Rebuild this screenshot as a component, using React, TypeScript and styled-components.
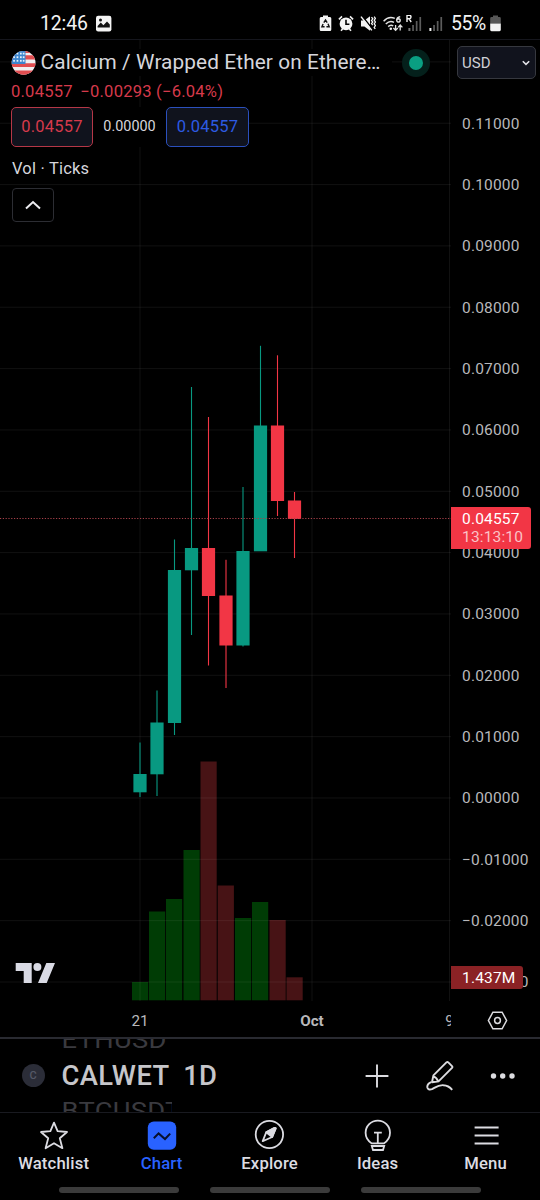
import React from "react";
import styled, { createGlobalStyle } from "styled-components";

const GlobalStyle = createGlobalStyle`
  * { box-sizing: border-box; }
  body {
    margin: 0;
    background: #000;
    color: #d6d6dc;
    font-family: Roboto, "Liberation Sans", sans-serif;
  }
`;

const Screen = styled.div`
  width: 540px;
  height: 1200px;
  display: flex;
  flex-direction: column;
  overflow: hidden;
  background: #000;
`;

const StatusBar = styled.header`
  height: 40px;
  padding: 8px 39.5px 0 40px;
  display: flex;
  align-items: center;
  border-bottom: 1px solid #15161d;
  color: #f4f4f4;
`;

const Clock = styled.span`
  width: 56px;
  font-size: 19.4px;
  letter-spacing: -0.1px;
  line-height: 32px;
`;

const StatusIcons = styled.div`
  margin-left: auto;
  display: flex;
  align-items: center;
`;

const Glyph = styled.svg<{ $gap?: number }>`
  display: block;
  flex: none;
  margin-right: ${(p) => p.$gap ?? 0}px;
`;

const BatteryText = styled.span`
  width: 38.5px;
  font-size: 19.4px;
  letter-spacing: -0.4px;
  line-height: 32px;
`;

const ChartArea = styled.main`
  position: relative;
  height: 997px;
  display: flex;
`;

const PlotColumn = styled.div`
  width: 451px;
  display: flex;
  flex-direction: column;
`;

const Plot = styled.svg`
  display: block;
  width: 451px;
  height: 961px;
`;

const TimeAxis = styled.div`
  height: 36px;
  padding-left: 54px;
  display: flex;
  overflow: hidden;
`;

const TimeLabel = styled.span<{ $width: number; $strong?: boolean }>`
  flex: none;
  width: ${(p) => p.$width}px;
  text-align: center;
  font-size: 15.2px;
  line-height: 40px;
  font-weight: ${(p) => (p.$strong ? 700 : 400)};
  color: #b8b8bb;
`;

const PriceAxis = styled.aside`
  position: relative;
  width: 89px;
  display: flex;
  flex-direction: column;
`;

const CurrencySelect = styled.button`
  width: 79px;
  height: 33px;
  margin: 6px 0 0 5.5px;
  padding: 0 5px 0 4.5px;
  display: flex;
  align-items: center;
  justify-content: space-between;
  border: 1.5px solid #36383f;
  border-radius: 5px;
  background: #11131d;
  color: #cfd0d6;
  font: 400 15px Roboto, sans-serif;
`;

const PriceScale = styled.div`
  height: 906px;
  margin-top: 14.5px;
  padding-left: 11px;
  overflow: hidden;
`;

const PriceLabel = styled.div`
  height: 61.35px;
  line-height: 61.35px;
  font-size: 15.5px;
  letter-spacing: 0.17px;
  color: #b8b8bb;
`;

const AxisFooter = styled.div`
  margin-top: auto;
  height: 33px;
  padding: 7px 0 0 35.5px;
`;

const PriceTag = styled.div<{ $top: number; $width: number; $color: string }>`
  position: absolute;
  left: 0;
  top: ${(p) => p.$top}px;
  width: ${(p) => p.$width}px;
  padding: 3px 0 2px 11px;
  border-radius: 0 3px 3px 0;
  background: ${(p) => p.$color};
  color: #fff;
  font-size: 15.5px;
  letter-spacing: 0.17px;
  line-height: 18.3px;
`;

const Countdown = styled.div`
  color: #fbc3c7;
`;

const Legend = styled.section`
  position: absolute;
  left: 11px;
  top: 9px;
  width: 422px;
`;

const TitleRow = styled.div`
  height: 27px;
  display: flex;
  align-items: center;
`;

const Title = styled.h1`
  margin: 0 0 0 4.6px;
  width: 351px;
  font-size: 20.8px;
  font-weight: 400;
  letter-spacing: 0.1px;
  line-height: 27px;
  white-space: nowrap;
  background: #000;
`;

const MarketDot = styled.span`
  width: 28px;
  height: 28px;
  margin-left: 10.9px;
  border: 7.5px solid #04201b;
  border-radius: 50%;
  background: #0a9f82;
`;

const ChangeRow = styled.div`
  margin-top: 5.6px;
  display: flex;
  gap: 7.6px;
  color: #d63a4b;
  font-size: 16.6px;
  letter-spacing: 0.2px;
  line-height: 20px;
`;

const QuoteRow = styled.div`
  width: 238px;
  height: 40px;
  margin-top: 5.4px;
  display: flex;
  align-items: center;
  background: #000;
`;

const Quote = styled.button<{ $width: number; $color: string; $edge: string }>`
  width: ${(p) => p.$width}px;
  height: 40px;
  padding: 0;
  border: 1.5px solid ${(p) => p.$edge};
  border-radius: 5px;
  background: #10131d;
  color: ${(p) => p.$color};
  font: 400 16.5px Roboto, sans-serif;
  letter-spacing: 0.2px;
`;

const Spread = styled.span`
  flex: 1;
  text-align: center;
  font-size: 14.4px;
`;

const Indicator = styled.div`
  margin: 12px 0 0 1px;
  font-size: 16.5px;
  letter-spacing: 0.2px;
  line-height: 20px;
`;

const CollapseButton = styled.button`
  width: 41.5px;
  height: 34px;
  margin: 9px 0 0 1px;
  padding: 0;
  display: flex;
  align-items: center;
  justify-content: center;
  border: 1.5px solid #2c2d33;
  border-radius: 4px;
  background: #000;
`;

const Watermark = styled.svg`
  position: absolute;
  left: 15px;
  top: 922px;
`;

const SymbolBar = styled.section`
  height: 76px;
  padding: 0 25px 0 21.5px;
  display: flex;
  align-items: center;
  border-top: 2px solid #292a31;
  border-bottom: 1px solid #191a20;
  overflow: hidden;
`;

const SymbolBadge = styled.span`
  width: 23px;
  height: 23px;
  border-radius: 50%;
  background: #2b2d38;
  color: #565967;
  font-size: 11px;
  font-weight: 500;
  line-height: 23px;
  text-align: center;
`;

const Wheel = styled.div`
  width: 200px;
  height: 103px;
  flex: none;
  margin-left: 17px;
  display: flex;
  flex-direction: column;
  justify-content: space-between;
`;

const WheelItem = styled.div`
  width: 110px;
  height: 32px;
  overflow: hidden;
  font-size: 27.3px;
  letter-spacing: 0.3px;
  line-height: 32px;
  color: #3a3a3f;
  transform: scaleY(0.86);
`;

const WheelCurrent = styled.div`
  display: flex;
  gap: 13.5px;
  font-size: 27.4px;
  font-weight: 500;
  letter-spacing: 0.4px;
  line-height: 32px;
  color: #c6c6ca;
`;

const ToolGroup = styled.div`
  margin-left: auto;
  display: flex;
  align-items: center;
`;

const NavBar = styled.nav`
  height: 66px;
  display: grid;
  grid-template-columns: repeat(5, 108px);
  margin-left: -0.4px;
`;

const NavItem = styled.div<{ $active?: boolean }>`
  padding-top: 6px;
  display: flex;
  flex-direction: column;
  align-items: center;
  gap: 1.6px;
  font-size: 16.7px;
  font-weight: 500;
  letter-spacing: 0.15px;
  line-height: 22px;
  color: ${(p) => (p.$active ? "#2962ff" : "#dcdce2")};
`;

const GestureBar = styled.footer`
  padding: 8px 59px 0;
  display: flex;
  justify-content: space-between;
`;

const Pill = styled.span`
  width: 120px;
  height: 6px;
  border-radius: 3px;
  background: #3b3b3b;
`;

const UP = "#089981";
const DOWN = "#f23645";

// x centre, body top, body bottom, wick top, wick bottom, rising, volume left, volume top
const bars: [number, number, number, number, number, boolean, number, number][] = [
  [140, 774, 792.3, 742.5, 797, true, 132, 982],
  [157, 722.5, 774.3, 690.5, 796, true, 149, 911.5],
  [174.5, 570, 723, 539.5, 735, true, 166, 899],
  [191.5, 548, 570.3, 387, 635, true, 183.5, 850],
  [208.5, 548, 596, 417, 665.5, false, 200.5, 761.5],
  [226, 595.5, 645.5, 559.8, 688, false, 217.7, 885.5],
  [243, 551, 645.5, 487, 646.5, true, 235, 918],
  [260.5, 425.5, 551.3, 345.8, 551, true, 252, 902],
  [277.5, 425.5, 501, 355.3, 516, false, 269.5, 920],
  [294.5, 500.5, 519, 492, 558, false, 286.5, 977.3],
];

const gridRows = Array.from({ length: 16 }, (_, i) => 61.9 + i * 61.34);

const prices = [
  "0.11000", "0.10000", "0.09000", "0.08000", "0.07000", "0.06000", "0.05000", "0.04000",
  "0.03000", "0.02000", "0.01000", "0.00000", "−0.01000", "−0.02000", "−0.03000",
];

const CandlePlot = () => (
  <Plot viewBox="0 40 451 961">
    {bars.map(([x, , , , , up, vx, vy]) => (
      <rect key={x} x={vx} y={vy} width="16.2" height={1000.3 - vy} fill={up ? "#003c05" : "#471315"} />
    ))}
    <g stroke="#fff" strokeOpacity="0.065">
      {gridRows.map((y) => <path key={y} d={`M0 ${y}H451`} />)}
      <path d="M140 40V1001M312 40V1001M449.5 40V1001" />
    </g>
    {bars.map(([x, top, bottom, high, low, up]) => (
      <g key={x} fill={up ? UP : DOWN}>
        <rect x={x - 0.55} y={high} width="1.1" height={low - high} />
        <rect x={x - 6.6} y={top} width="13.2" height={bottom - top} />
      </g>
    ))}
    <path d="M0 518.5H451" stroke="#a8404a" strokeDasharray="1.2 1.6" />
  </Plot>
);

const Flag = () => (
  <Glyph width="25" height="25" viewBox="0 0 25 25">
    <clipPath id="flagDisc"><circle cx="12.6" cy="12.8" r="11.9" /></clipPath>
    <g clipPath="url(#flagDisc)">
      <rect width="25" height="25" fill="#f1eff0" />
      <path d="M0 5.2H25V9.4H0ZM0 13.2H25V17H0ZM0 20.4H25V25H0Z" fill="#e04d50" />
      <path d="M13 0H25V3H13Z" fill="#e04d50" />
      <rect width="14.5" height="14" fill="#3c86cf" />
      <g fill="#e8f2fa">
        {[2.7, 6.3, 9.9].map((y) => [3, 6.4, 9.8, 12.6].map((x) => <rect key={`${x}-${y}`} x={x - 0.8} y={y} width="1.7" height="1.8" />))}
      </g>
    </g>
  </Glyph>
);

const SignalBars = ({ roaming }: { roaming?: boolean }) => (
  <Glyph width={roaming ? 16 : 14} height="17" viewBox={roaming ? "0 0 16 17" : "2 0 14 17"} $gap={roaming ? 7 : 8}>
    <g fill="#5c5c5c">
      <rect x="6.2" y="10" width="1.7" height="6" />
      <rect x="9.8" y="6" width="1.7" height="10" />
      <rect x="13.4" y="2" width="1.7" height="14" />
    </g>
    <rect x="2.4" y="13" width="2" height="3" fill={roaming ? "#777" : "#f4f4f4"} />
    {roaming && <path d="M1 7V0.2H3.2Q5 0.2 5 2Q5 3.7 3.2 3.7H1M3 3.7L5.2 7" fill="none" stroke="#f4f4f4" strokeWidth="1.4" />}
  </Glyph>
);

const StatusGlyphs = () => (
  <>
    <Glyph width="13" height="17" viewBox="0 0 13 17" $gap={6.5}>
      <path d="M4 0.5H9V2H11Q12.3 2 12.3 3.5V14.5Q12.3 16 11 16H2Q0.7 16 0.7 14.5V3.5Q0.7 2 2 2H4Z" fill="#f4f4f4" />
      <path d="M4.8 7.6L6.5 5L8.2 7.6M9 8.8L10.2 11.8H7.4M5.6 11.8H2.9L4.1 8.9" fill="none" stroke="#111" strokeWidth="1.4" />
    </Glyph>
    <Glyph width="16" height="17" viewBox="0 0 16 17" $gap={6}>
      <circle cx="8" cy="8.8" r="6.4" fill="#f4f4f4" />
      <path d="M0.9 4.3L4 1.4M15.1 4.3L12 1.4M3 15.8L4.6 14M13 15.8L11.4 14" stroke="#f4f4f4" strokeWidth="1.6" />
      <path d="M8 4.8V9.2H11.4" fill="none" stroke="#000" strokeWidth="1.6" />
    </Glyph>
    <Glyph width="16" height="17" viewBox="0 0 16 17" $gap={7}>
      <path d="M1 5.6H4.4L10 1.2V15.8L4.4 11.4H1Z" fill="#f4f4f4" />
      <path d="M2 0.6L12.6 14.2" stroke="#000" strokeWidth="1.5" />
      <path d="M1 1.6L11.8 15.4" stroke="#f4f4f4" strokeWidth="1.5" />
      <path d="M11.5 2.2L12.8 3.8L11.5 5.4L12.8 7L11.5 8.6L12.8 10.2M14.2 1.6L15.4 3.4L14.2 5.2L15.4 7L14.2 8.8L15.4 10.6L14.2 12.4L15.2 14" fill="none" stroke="#f4f4f4" strokeWidth="1.3" />
    </Glyph>
    <Glyph width="20" height="17" viewBox="0 0 20 17" $gap={3}>
      <g fill="none" stroke="#e4e4e4" strokeWidth="1.5">
        <path d="M0.6 6.2Q5.6 0.8 11.8 3.4M2.8 9Q6.8 4.9 11 7.3M5.2 11.6Q7.6 9.2 10.2 10.8" />
        <path d="M17.2 1.7Q13.8 2 13.8 5A1.7 1.7 0 1 0 15.6 3.7Q14.4 3.7 13.9 4.6" />
        <path d="M12.6 10V15M10.4 13L12.6 15.4L14.8 13M17.2 15.6V10.4M15.2 12.4L17.2 10L19.4 12.4" strokeWidth="1.3" />
      </g>
      <circle cx="7.8" cy="13.8" r="1.3" fill="#f4f4f4" />
    </Glyph>
  </>
);

export default function App() {
  return (
    <>
      <GlobalStyle />
      <Screen>
        <StatusBar>
          <Clock>12:46</Clock>
          <Glyph width="16" height="17" viewBox="0 0 16 17">
            <rect x="0" y="0.8" width="15.4" height="15.6" rx="2.2" fill="#f4f4f4" />
            <path d="M1.6 12.6V11L4.8 7.6L7.4 10.2L11 6.6L13.8 9.6V12.6Z" fill="#111" />
            <circle cx="4.5" cy="5" r="1.5" fill="#111" />
          </Glyph>
          <StatusIcons>
            <StatusGlyphs />
            <SignalBars roaming />
            <SignalBars />
            <BatteryText>55%</BatteryText>
            <Glyph width="11" height="17" viewBox="0 0 11 17">
              <path d="M3 0.5H8V2H9.5Q10.8 2 10.8 3.4V8.5H0.2V3.4Q0.2 2 1.5 2H3Z" fill="#575757" />
              <path d="M0.2 8.4H10.8V14.8Q10.8 16.2 9.5 16.2H1.5Q0.2 16.2 0.2 14.8Z" fill="#f4f4f4" />
            </Glyph>
          </StatusIcons>
        </StatusBar>

        <ChartArea>
          <PlotColumn>
            <CandlePlot />
            <TimeAxis>
              <TimeLabel $width={172}>21</TimeLabel>
              <TimeLabel $width={172} $strong>Oct</TimeLabel>
              <TimeLabel $width={103}>9</TimeLabel>
            </TimeAxis>
          </PlotColumn>

          <PriceAxis>
            <CurrencySelect>
              USD
              <Glyph width="8" height="6" viewBox="0 0 8 6">
                <path d="M0.8 1.2L4 4.3L7.2 1.2" fill="none" stroke="#e3e3e8" strokeWidth="1.6" />
              </Glyph>
            </CurrencySelect>
            <PriceScale>
              {prices.map((price) => <PriceLabel key={price}>{price}</PriceLabel>)}
            </PriceScale>
            <AxisFooter>
              <Glyph width="21" height="19" viewBox="0 0 21 19" fill="none" stroke="#dcdce0" strokeWidth="1.5">
                <path d="M5.9 1.2H15.1L19.6 9.5L15.1 17.8H5.9L1.4 9.5Z" />
                <circle cx="10.5" cy="9.5" r="2.9" />
              </Glyph>
            </AxisFooter>
            <PriceTag $top={467} $width={79.5} $color={DOWN}>
              0.04557
              <Countdown>13:13:10</Countdown>
            </PriceTag>
            <PriceTag $top={925.5} $width={71.5} $color="#8b2225">1.437M</PriceTag>
          </PriceAxis>

          <Legend>
            <TitleRow>
              <Flag />
              <Title>Calcium / Wrapped Ether on Ethere…</Title>
              <MarketDot />
            </TitleRow>
            <ChangeRow>
              <span>0.04557</span>
              <span>−0.00293 (−6.04%)</span>
            </ChangeRow>
            <QuoteRow>
              <Quote $width={82} $color="#d63a4b" $edge="#b53747">0.04557</Quote>
              <Spread>0.00000</Spread>
              <Quote $width={83} $color="#2d5be3" $edge="#2b50bd">0.04557</Quote>
            </QuoteRow>
            <Indicator>Vol · Ticks</Indicator>
            <CollapseButton>
              <Glyph width="18" height="12" viewBox="0 0 18 12">
                <path d="M2 9.4L9 3L16 9.4" fill="none" stroke="#ececf0" strokeWidth="2" />
              </Glyph>
            </CollapseButton>
          </Legend>

          <Watermark width="42" height="23" viewBox="0 0 42 23" fill="#d9dae4">
            <path d="M0.7 1H16.7V21H8.7V9H0.7ZM31.3 1H40L31.7 21H23Z" />
            <circle cx="22.4" cy="5" r="4" />
          </Watermark>
        </ChartArea>

        <SymbolBar>
          <SymbolBadge>C</SymbolBadge>
          <Wheel>
            <WheelItem>ETHUSD</WheelItem>
            <WheelCurrent><span>CALWET</span><span>1D</span></WheelCurrent>
            <WheelItem>BTCUSDT</WheelItem>
          </Wheel>
          <ToolGroup>
            <Glyph width="24" height="24" viewBox="0 0 24 24" $gap={37.5} stroke="#dcdce0" strokeWidth="1.9">
              <path d="M12 0.6V23.4M0.6 12H23.4" />
            </Glyph>
            <Glyph width="28" height="30" viewBox="0 0 28 30" $gap={36} fill="none" stroke="#dcdce0" strokeWidth="1.9" strokeLinejoin="round">
              <path d="M7.4 14.4L20.4 1.4Q21.4 0.6 22.3 1.4L26 5.1Q26.8 6 26 6.9L12.8 20.2L6 21.2ZM7.2 15.4Q10.8 16.6 12 20.2" />
              <path d="M5.2 21.2Q1 23 1.3 26.2Q2 29.4 6 28.2C9.5 26.4 12 23.8 17.5 24.2Q22.5 24.4 26.2 28.8" />
            </Glyph>
            <Glyph width="25" height="8" viewBox="0 0 25 8" fill="#dcdce0">
              <circle cx="3.5" cy="4" r="2.7" />
              <circle cx="12.7" cy="4" r="2.7" />
              <circle cx="22" cy="4" r="2.7" />
            </Glyph>
          </ToolGroup>
        </SymbolBar>

        <NavBar>
          <NavItem>
            <Glyph width="32" height="32" viewBox="0 0 32 32" fill="none" stroke="currentColor" strokeWidth="1.8" strokeLinejoin="round">
              <path d="M16 3.6L19.6 12.2L29 13L21.8 19.2L24.4 29.2L16 24.2L7.6 29.2L10.2 19.2L3 13L12.4 12.2Z" />
            </Glyph>
            Watchlist
          </NavItem>
          <NavItem $active>
            <Glyph width="32" height="32" viewBox="0 0 32 32">
              <rect x="1.8" y="2.4" width="28.4" height="28.4" rx="6" fill="#2962ff" />
              <path d="M7.8 19.2L12.6 14.4L19 20L24.2 14.6" fill="none" stroke="#070f2b" strokeWidth="2" />
            </Glyph>
            Chart
          </NavItem>
          <NavItem>
            <Glyph width="32" height="32" viewBox="0 0 32 32" fill="none" stroke="currentColor" strokeWidth="1.8" strokeLinejoin="round">
              <circle cx="15.4" cy="15.5" r="13.7" />
              <path d="M21.7 9.3Q21.2 8.5 20.2 9L12.2 13.4L8.7 22.2L18.2 18Z" />
              <path d="M21.7 9.3Q21.2 8.5 20.2 9L12.2 13.4L18.2 18Z" fill="currentColor" />
            </Glyph>
            Explore
          </NavItem>
          <NavItem>
            <Glyph width="32" height="32" viewBox="0 0 32 32" fill="none" stroke="currentColor" strokeWidth="1.8">
              <path d="M9.8 24.4Q3.6 20.6 3.6 13.8A12.2 12.2 0 0 1 28 13.8Q28 20.6 21.8 24.4Z" />
              <path d="M12 13.6H19.8M15.8 13.6V24M9.8 27H22.2L21 31H11Z" />
            </Glyph>
            Ideas
          </NavItem>
          <NavItem>
            <Glyph width="32" height="32" viewBox="0 0 32 32" stroke="currentColor" strokeWidth="2">
              <path d="M4.6 8.5H28.6M4.6 16.5H28.6M4.6 24.5H28.6" />
            </Glyph>
            Menu
          </NavItem>
        </NavBar>

        <GestureBar>
          <Pill />
          <Pill />
          <Pill />
        </GestureBar>
      </Screen>
    </>
  );
}
